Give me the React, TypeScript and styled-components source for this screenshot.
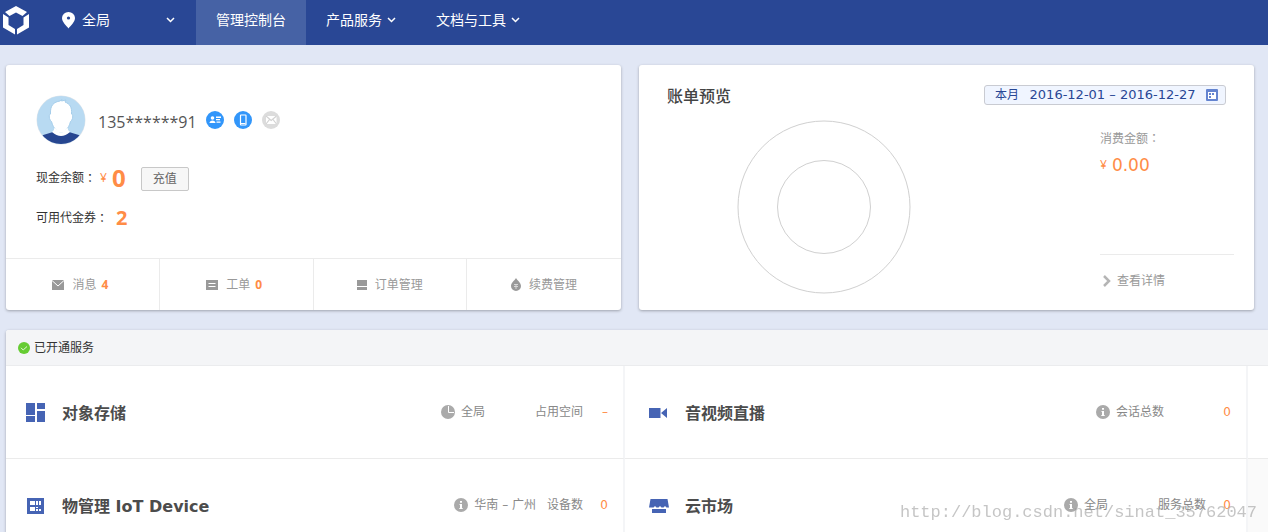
import React from 'react';
import styled, { createGlobalStyle } from 'styled-components';

const cjk = '"Noto Sans CJK SC", sans-serif';
const textFont = `"Open Sans", ${cjk}`;
const wideFont = `"DejaVu Sans", ${cjk}`;

const GlobalStyle = createGlobalStyle`
  *, *::before, *::after { box-sizing: border-box; }
  body {
    margin: 0;
    background: #e1e7f5;
    color: #333;
    font: 12px/20px ${textFont};
  }
  button, a { font: inherit; color: inherit; text-decoration: none; }
  h1, h2, h3, p { margin: 0; font-weight: normal; }
  svg { display: block; flex: none; }
`;

const Page = styled.div`
  height: 100vh;
  overflow-x: hidden;
  overflow-y: auto;
  scrollbar-width: none;
`;

/* Top bar */

const TopBar = styled.header`
  display: flex;
  align-items: stretch;
  height: 45px;
  background: #294795;
  color: #fff;
  font-size: 14px;
`;

const Logo = styled.a`
  display: flex;
  align-items: center;
  padding: 0 33px 5px 3px;
`;

const RegionPicker = styled.button`
  display: flex;
  align-items: center;
  gap: 7px;
  width: 134px;
  padding: 0 21px 5px 0;
  border: 0;
  background: none;
  cursor: pointer;

  svg:last-child { margin-left: auto; }
`;

const Nav = styled.nav`
  display: flex;
`;

const NavItem = styled.a<{ $active?: boolean }>`
  display: flex;
  align-items: center;
  gap: 5px;
  padding: 0 20px 5px;
  background: ${(p) => (p.$active ? '#4662a5' : 'transparent')};
`;

/* Cards */

const Cards = styled.div`
  display: grid;
  grid-template-columns: 1fr 1fr;
  gap: 18px;
  padding: 20px 14px 20px 6px;
`;

const Card = styled.section`
  display: flex;
  flex-direction: column;
  min-height: 245px;
  background: #fff;
  border-radius: 3px;
  box-shadow: 0 1px 3px rgba(0, 0, 0, 0.3);
`;

const Account = styled.div`
  flex: 1;
  padding: 30px 30px 0;
`;

const Identity = styled.div`
  display: flex;
  align-items: center;
  height: 50px;
`;

const Phone = styled.h1`
  margin: 4px 9px 0 12px;
  color: #555;
  font-size: 16px;
  line-height: 24px;
`;

const Badges = styled.div`
  display: flex;
  gap: 10px;
`;

const MoneyRow = styled.div`
  display: flex;
  align-items: center;
  height: 40px;
`;

const Balance = styled(MoneyRow)`
  margin-top: 13px;
`;

const Colon = styled.span`
  font-family: "Noto Sans CJK TC", sans-serif;
`;

const Currency = styled.span`
  margin: 0 5px 0 4px;
  color: #ff8c46;
  font-size: 12px;
`;

const Amount = styled.strong<{ $size: number; $gap?: number }>`
  margin-left: ${(p) => p.$gap ?? 0}px;
  color: #ff8c46;
  font-size: ${(p) => p.$size}px;
  line-height: 24px;
`;

const Recharge = styled.button`
  height: 24px;
  margin: 2px 0 0 15px;
  padding: 0 11px;
  border: 1px solid #c8c8c8;
  border-radius: 2px;
  background: #f7f7f7;
  color: #666;
  line-height: 22px;
  cursor: pointer;
`;

const Shortcuts = styled.nav`
  display: grid;
  grid-template-columns: repeat(4, 1fr);
  height: 52px;
  border-top: 1px solid #ebebeb;
`;

const Shortcut = styled.a`
  display: flex;
  align-items: center;
  justify-content: center;
  gap: 8px;
  color: #999;

  &:not(:last-child) { border-right: 1px solid #ebebeb; }

  strong { margin: 0 4px 0 5px; color: #ff8c46; }
`;

/* Bill */

const BillHead = styled.div`
  display: flex;
  align-items: center;
  justify-content: space-between;
  padding: 19px 28px 0;
`;

const BillTitle = styled.h2`
  color: #444;
  font-size: 16px;
  font-weight: 500;
  line-height: 24px;
`;

const DateRange = styled.button`
  display: flex;
  align-items: center;
  justify-content: space-between;
  gap: 8px;
  min-width: 242px;
  height: 20px;
  margin-bottom: 2px;
  padding: 0 7px 0 10px;
  border: 1px solid #c9cbd2;
  border-radius: 3px;
  background: #f0f5ff;
  color: #294795;
  line-height: 18px;
  cursor: pointer;
`;

const Dates = styled.span`
  font-family: ${wideFont};
  font-size: 13px;
`;

const BillBody = styled.div`
  display: flex;
  flex: 1;
  justify-content: space-between;
  padding: 12px 20px 0 98px;
`;

const BillSide = styled.div`
  display: flex;
  flex-direction: column;
  width: 134px;
  color: #999;
`;

const BillTotal = styled.p`
  flex: 1;
  padding-top: 8px;
`;

const TotalLine = styled.span`
  display: flex;
  align-items: center;
  gap: 5px;
  height: 32px;
  color: #ff8c46;
`;

const TotalValue = styled.span`
  font: 17px/24px ${wideFont};
`;

const Details = styled.a`
  display: flex;
  align-items: center;
  gap: 6px;
  height: 56px;
  padding: 0 0 3px 3px;
  border-top: 1px solid #ebebeb;
`;

/* Services */

const Services = styled.section`
  margin-left: 6px;
  overflow: hidden;
  border-radius: 3px 0 0 0;
  background: #fff;
  box-shadow: 0 1px 3px rgba(0, 0, 0, 0.3);
`;

const ServicesHead = styled.h2`
  display: flex;
  align-items: center;
  gap: 4px;
  height: 36px;
  padding-left: 12px;
  border-bottom: 1px solid #ebecee;
  background: #f4f5f7;
  font-size: 12px;
`;

const ServiceGrid = styled.div`
  display: grid;
  grid-template-columns: 1fr 1fr 20px;
  margin-left: -4px;
`;

const Cell = styled.article`
  display: flex;
  align-items: center;
  height: 93px;
  padding: 1px 15px 0 24px;
  border-right: 2px solid #f4f5f7;
  border-bottom: 1px solid #ebebeb;
`;

const EmptyCell = styled.div<{ $shaded?: boolean }>`
  border-bottom: 1px solid #ebebeb;
  background: ${(p) => (p.$shaded ? '#fafafa' : '#fff')};
`;

const ServiceIcon = styled.span`
  width: 36px;
`;

const ServiceName = styled.h3`
  flex: 1;
  padding-top: 3px;
  color: #4c4c4c;
  font: bold 16px/24px ${wideFont};
`;

const Meta = styled.div`
  display: flex;
  align-items: center;
  gap: 6px;
  padding-bottom: 2px;
  color: #888;
  font-family: ${wideFont};
`;

const MetaLabel = styled.span<{ $gap: number }>`
  margin-left: ${(p) => p.$gap}px;
`;

const MetaValue = styled.span<{ $wide?: boolean }>`
  width: ${(p) => (p.$wide ? 61 : 19)}px;
  color: #ff8c46;
  text-align: right;
`;

const Watermark = styled.div`
  position: fixed;
  right: 11px;
  bottom: 7px;
  color: rgba(150, 150, 150, 0.55);
  font: 17px/24px "Liberation Mono", monospace;
  pointer-events: none;
`;

/* Icons */

const LogoMark = () => (
  <svg width="26" height="30" viewBox="0 0 26 30" fill="#fff">
    <path d="M13 1 24 7 19.500 11 13 7.500 6.500 11 2 7Z" />
    <path d="M0 9 5.500 12.500V20L12 24V29.500L0 22.500Z" />
    <path d="M26 9 20.500 12.500V20L14 24V29.500L26 22.500Z" />
  </svg>
);

const Pin = () => (
  <svg width="13" height="17" viewBox="0 0 12 17" preserveAspectRatio="none">
    <path fill="#fff" fillRule="evenodd" d="M6 0a6 6 0 0 1 6 6c0 4-4 7.500-6 10.500C4 13.500 0 10 0 6a6 6 0 0 1 6-6Zm0 4.500a1.500 1.500 0 1 0 0 3 1.500 1.500 0 0 0 0-3Z" />
  </svg>
);

const Chevron = () => (
  <svg width="9" height="6" viewBox="0 0 9 6" fill="none" stroke="#fff" strokeWidth="1.500">
    <path d="m1 1 3.500 3.500L8 1" />
  </svg>
);

const Avatar = () => (
  <svg width="50" height="50" viewBox="0 0 50 50">
    <clipPath id="face"><circle cx="25" cy="25" r="24" /></clipPath>
    <circle cx="25" cy="25" r="24.500" fill="#dfe5ea" />
    <g clipPath="url(#face)">
      <rect width="50" height="50" fill="#b8daf2" />
      <path d="M4 41 17 37Q25 42 33 37L46 41V50H4Z" fill="#274690" />
      <path d="M16 37Q25 45 34 37L31 34H19Z" fill="#fff" />
      <path
        d="M14.500 19C14 10 18 7 24 6L26 4.500 25.500 6 30 5 29 7C34 9 36 12 35.500 19c2 0 1.500 6-1 7.500-1 4-2.500 6.500-4.500 8.500-3 2.500-7 2.500-10 0-2-2-3.500-4.500-4.500-8.500-2.500-1.500-3-7.500-1-7.500Z"
        fill="#fff" stroke="#a5cdea" strokeWidth="1"
      />
      <path d="M18 33v2q7 5 14 0v-2q-7 5-14 0Z" fill="#fff" />
    </g>
  </svg>
);

const IdBadge = () => (
  <svg width="18" height="18" viewBox="0 0 18 18">
    <circle cx="9" cy="9" r="9" fill="#3296fa" />
    <g fill="#fff">
      <circle cx="6.500" cy="7" r="1.800" />
      <path d="M3.500 12c0-3.500 6-3.500 6 0ZM10 5.500h5V7h-5ZM10 8h4v1.200h-4ZM10.500 10.500h4v1.200h-4Z" />
    </g>
  </svg>
);

const PhoneBadge = () => (
  <svg width="18" height="18" viewBox="0 0 18 18">
    <circle cx="9" cy="9" r="9" fill="#3296fa" />
    <rect x="6.500" y="4" width="5.500" height="10" rx="0.500" fill="none" stroke="#fff" strokeWidth="1.200" />
    <path d="M7 12.500h4.500" stroke="#fff" />
  </svg>
);

const MailBadge = () => (
  <svg width="18" height="18" viewBox="0 0 18 18">
    <circle cx="9" cy="9" r="9" fill="#dcdcdc" />
    <rect x="4" y="5" width="10.500" height="8" fill="#fff" />
    <path d="m4 5 5.200 4.500L14.500 5M4 13l3.500-4.500M14.500 13 11 8.500" fill="none" stroke="#d2d2d2" strokeWidth="1.200" />
  </svg>
);

const MailIcon = () => (
  <svg width="12" height="10" viewBox="0 0 12 10">
    <path fill="#999" d="M0 0h12v10H0Z" />
    <path d="m0 .5 6 5.500 6-5.500" fill="none" stroke="#fff" />
  </svg>
);

const TicketIcon = () => (
  <svg width="12" height="10" viewBox="0 0 12 10">
    <path fill="#999" d="M0 0h12v10H0Z" />
    <path d="M2.500 3.500h7M2.500 6.500h7" stroke="#fff" />
  </svg>
);

const OrderIcon = () => (
  <svg width="10" height="10" viewBox="0 0 10 10" fill="#999">
    <path d="M0 0h10v6H0ZM0 7h10v3H0Z" />
  </svg>
);

const RenewIcon = () => (
  <svg width="10" height="13" viewBox="0 0 10 13">
    <path fill="#999" d="M5 0c1.500 2.500 5 5 5 8a5 5 0 0 1-10 0c0-3 3.500-5.500 5-8Z" />
    <path d="M3 6.500h4M3 8.500h4M5 6v5" stroke="#ddd" strokeWidth="0.900" />
  </svg>
);

const CalendarIcon = () => (
  <svg width="12" height="12" viewBox="0 0 12 12">
    <rect width="12" height="12" rx="1" fill="#6484d0" />
    <path fill="#fff" d="M2 3h8v7H2Z" />
    <path fill="#6484d0" d="M3 4h2v2H3ZM6 4h2v2H6ZM3 7h2v2H3Z" />
  </svg>
);

const ArrowRight = () => (
  <svg width="8" height="12" viewBox="0 0 8 12" fill="none" stroke="#b5b5b5" strokeWidth="2.500">
    <path d="m1 1 5 5-5 5" />
  </svg>
);

const CheckIcon = () => (
  <svg width="12" height="12" viewBox="0 0 12 12">
    <circle cx="6" cy="6" r="6" fill="#66cc33" />
    <path d="m3 5.800 2.200 2.200L9 4.500" fill="none" stroke="#e4f7da" />
  </svg>
);

const PieIcon = () => (
  <svg width="14" height="14" viewBox="0 0 14 14">
    <circle cx="7" cy="7" r="7" fill="#aaa" />
    <path d="M7.500 1v6.500H13" fill="none" stroke="#fff" />
  </svg>
);

const InfoIcon = () => (
  <svg width="14" height="14" viewBox="0 0 14 14">
    <circle cx="7" cy="7" r="7" fill="#aaa" />
    <path fill="#fff" d="M6 3h2v1.800H6ZM5.500 6H8v4h.7v1H5.300v-1H6V7h-.5Z" />
  </svg>
);

const StorageIcon = () => (
  <svg width="21" height="20" viewBox="0 0 21 20" fill="#4664b4">
    <path d="M0 0h9v12H0ZM11 0h8v6h-8ZM0 13h9v6H0ZM11 8h8v11h-8Z" />
  </svg>
);

const DeviceIcon = () => (
  <svg width="21" height="16" viewBox="0 0 21 16">
    <path fill="#4664b4" d="M1 0h17v16H1Z" />
    <path fill="#fff" d="M4 3h5v4H4ZM4 9h5v4H4ZM10 3h2v4h-2ZM13 3h2v4h-2ZM10 9h2v1h-2ZM10 11h2v2h-2ZM13 11h2v2h-2Z" />
  </svg>
);

const VideoIcon = () => (
  <svg width="19" height="12" viewBox="0 0 19 12" fill="#4664b4">
    <path d="M0 1h11.500v10H0ZM12 6l6-5v10Z" />
  </svg>
);

const MarketIcon = () => (
  <svg width="21" height="16" viewBox="0 0 21 16" fill="#4664b4">
    <path d="M1.500 1h17L20 9.500h-2.500L16 8l-1.500 1.500h-2L11 8 9.500 9.500h-2L6 8 4.500 9.500H0ZM3 11h14v4H3Z" />
  </svg>
);

const Donut = () => (
  <svg width="174" height="174" viewBox="0 0 174 174" fill="none" stroke="#d0d0d0" role="img" aria-label="账单">
    <circle cx="87" cy="87" r="86" />
    <circle cx="87" cy="87" r="46.500" />
  </svg>
);

const shortcuts = [
  { label: '消息', count: 4, icon: <MailIcon /> },
  { label: '工单', count: 0, icon: <TicketIcon /> },
  { label: '订单管理', icon: <OrderIcon /> },
  { label: '续费管理', icon: <RenewIcon /> },
];

export default function App() {
  return (
    <Page>
      <GlobalStyle />
      <TopBar>
        <Logo href="#" aria-label="首页"><LogoMark /></Logo>
        <RegionPicker type="button"><Pin />全局<Chevron /></RegionPicker>
        <Nav>
          <NavItem href="#" $active>管理控制台</NavItem>
          <NavItem href="#">产品服务<Chevron /></NavItem>
          <NavItem href="#">文档与工具<Chevron /></NavItem>
        </Nav>
      </TopBar>

      <Cards>
        <Card>
          <Account>
            <Identity>
              <Avatar />
              <Phone>135******91</Phone>
              <Badges><IdBadge /><PhoneBadge /><MailBadge /></Badges>
            </Identity>
            <Balance>
              现金余额<Colon>：</Colon>
              <Currency>¥</Currency>
              <Amount $size={24}>0</Amount>
              <Recharge type="button">充值</Recharge>
            </Balance>
            <MoneyRow>
              可用代金券<Colon>：</Colon>
              <Amount $size={20} $gap={8}>2</Amount>
            </MoneyRow>
          </Account>
          <Shortcuts>
            {shortcuts.map((s) => (
              <Shortcut href="#" key={s.label}>
                {s.icon}
                <span>{s.label}{s.count !== undefined && <strong>{s.count}</strong>}</span>
              </Shortcut>
            ))}
          </Shortcuts>
        </Card>

        <Card>
          <BillHead>
            <BillTitle>账单预览</BillTitle>
            <DateRange type="button">
              本月 <Dates>2016-12-01 – 2016-12-27</Dates><CalendarIcon />
            </DateRange>
          </BillHead>
          <BillBody>
            <Donut />
            <BillSide>
              <BillTotal>
                消费金额<Colon>：</Colon>
                <TotalLine>¥<TotalValue>0.00</TotalValue></TotalLine>
              </BillTotal>
              <Details href="#"><ArrowRight />查看详情</Details>
            </BillSide>
          </BillBody>
        </Card>
      </Cards>

      <Services>
        <ServicesHead><CheckIcon />已开通服务</ServicesHead>
        <ServiceGrid>
          <Cell>
            <ServiceIcon><StorageIcon /></ServiceIcon>
            <ServiceName>对象存储</ServiceName>
            <Meta><PieIcon />全局<MetaLabel $gap={44}>占用空间</MetaLabel><MetaValue>–</MetaValue></Meta>
          </Cell>
          <Cell>
            <ServiceIcon><VideoIcon /></ServiceIcon>
            <ServiceName>音视频直播</ServiceName>
            <Meta><InfoIcon />会话总数<MetaValue $wide>0</MetaValue></Meta>
          </Cell>
          <EmptyCell />
          <Cell>
            <ServiceIcon><DeviceIcon /></ServiceIcon>
            <ServiceName>物管理 IoT Device</ServiceName>
            <Meta><InfoIcon />华南 – 广州<MetaLabel $gap={5}>设备数</MetaLabel><MetaValue>0</MetaValue></Meta>
          </Cell>
          <Cell>
            <ServiceIcon><MarketIcon /></ServiceIcon>
            <ServiceName>云市场</ServiceName>
            <Meta><InfoIcon />全局<MetaLabel $gap={44}>服务总数</MetaLabel><MetaValue>0</MetaValue></Meta>
          </Cell>
          <EmptyCell $shaded />
        </ServiceGrid>
      </Services>
      <Watermark>http://blog.csdn.net/sinat_35762047</Watermark>
    </Page>
  );
}
